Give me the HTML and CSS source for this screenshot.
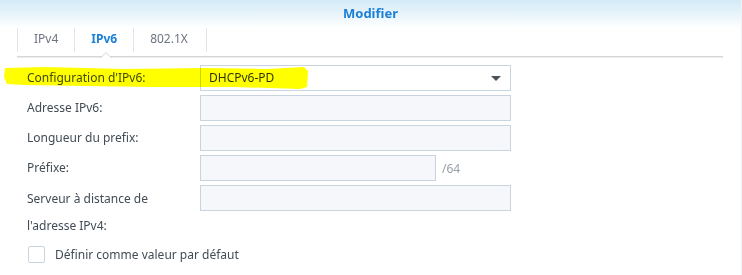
FILE: index.html
```html
<!DOCTYPE html>
<html lang="fr">
<head>
    <meta charset="UTF-8">
    <title>Modifier</title>
    <link rel="stylesheet" href="styles.css">
</head>
<body>
<div class="window">
    <div class="header">Modifier</div>

    <div class="tabs">
        <div class="tab">IPv4</div>
        <div class="tab active">IPv6</div>
        <div class="tab wide">802.1X</div>
    </div>

    <div class="form">
        <div class="row">
            <label>Configuration d'IPv6:</label>
            <div class="select">DHCPv6-PD<span class="arrow"></span></div>
        </div>
        <div class="row">
            <label>Adresse IPv6:</label>
            <div class="input"></div>
        </div>
        <div class="row">
            <label>Longueur du prefix:</label>
            <div class="input"></div>
        </div>
        <div class="row">
            <label>Préfixe:</label>
            <div class="with-suffix">
                <div class="input short"></div>
                <span class="suffix">/64</span>
            </div>
        </div>
        <div class="row tall">
            <label>Serveur à distance de<br>l'adresse IPv4:</label>
            <div class="input"></div>
        </div>
        <div class="check">
            <span class="box"></span>
            <span>Définir comme valeur par défaut</span>
        </div>
    </div>

    <!-- marker highlight drawn over the first row -->
    <svg class="marker" width="310" height="26" viewBox="0 0 310 26">
        <path d="M1 3 L40 2 L120 4 L200 3 L262 4 L300 2 L304 6 L303 22 L296 24 L230 22 L150 22 L80 21 L20 20 L3 19 L0 12 Z" fill="#ffff00"/>
    </svg>
</div>
</body>
</html>
```

FILE: styles.css
```css
body { margin: 0; font-family: "Noto Sans", "Open Sans", sans-serif; font-size: 12px; color: #414b55; background: #fff; }
.window { position: relative; width: 742px; height: 275px; border-right: 1px solid #eef2f5; box-sizing: border-box; }

.header { height: 28px; line-height: 26px; text-align: center; font-weight: bold; font-size: 13px; color: #1b80d6;
    background: linear-gradient(#d4ebf7, #eaf5fb 55%, #ffffff); }

.tabs { display: flex; margin-left: 17px; width: 706px; height: 29px; box-sizing: border-box;
    border-bottom: 1px solid #d6d6d6; box-shadow: 0 1px 0 #ececec; }
.tab { position: relative; height: 24px; line-height: 22px; padding: 0 16px; border-left: 1px solid #e1e5e8; color: #6b7480; }
.tab.wide { padding-right: 18px; }
.tab:last-child { border-right: 1px solid #e1e5e8; }
.tab.active { color: #1b80d6; font-weight: bold; }
.tab.active::before { content: ""; position: absolute; left: 25px; bottom: -6px; border: 6px solid transparent; border-bottom-color: #d6d6d6; border-top: 0; }
.tab.active::after { content: ""; position: absolute; left: 26px; bottom: -6px; border: 5px solid transparent; border-bottom-color: #fff; border-top: 0; }

.form { padding: 8px 0 0 27px; display: flex; flex-direction: column; gap: 4px; }
.row { display: grid; grid-template-columns: 173px 311px; align-items: center; }
.row label { line-height: 26px; }
.row.tall { align-items: start; }
.row.tall label { line-height: 27px; margin-top: 0; }

.select, .input { height: 26px; box-sizing: border-box; border: 1px solid #c9d4de; }
.select { background: #fff; line-height: 24px; padding-left: 8px; position: relative; color: #2e3740; }
.input { background: #f5f7fa; }
.arrow { position: absolute; right: 9px; top: 10px; border: 4px solid transparent; border-top: 5px solid #4a525a; border-left-width: 5px; border-right-width: 5px; border-bottom: 0; }

.with-suffix { display: flex; align-items: center; gap: 6px; }
.input.short { width: 236px; }
.suffix { color: #9aa1a8; }

.check { display: flex; align-items: center; gap: 10px; margin-top: 3px; margin-left: 1px; }
.box { width: 15px; height: 15px; border: 1px solid #c9d4de; border-radius: 2px; background: #fff; }

.marker { position: absolute; left: 4px; top: 65px; mix-blend-mode: multiply; }
```
